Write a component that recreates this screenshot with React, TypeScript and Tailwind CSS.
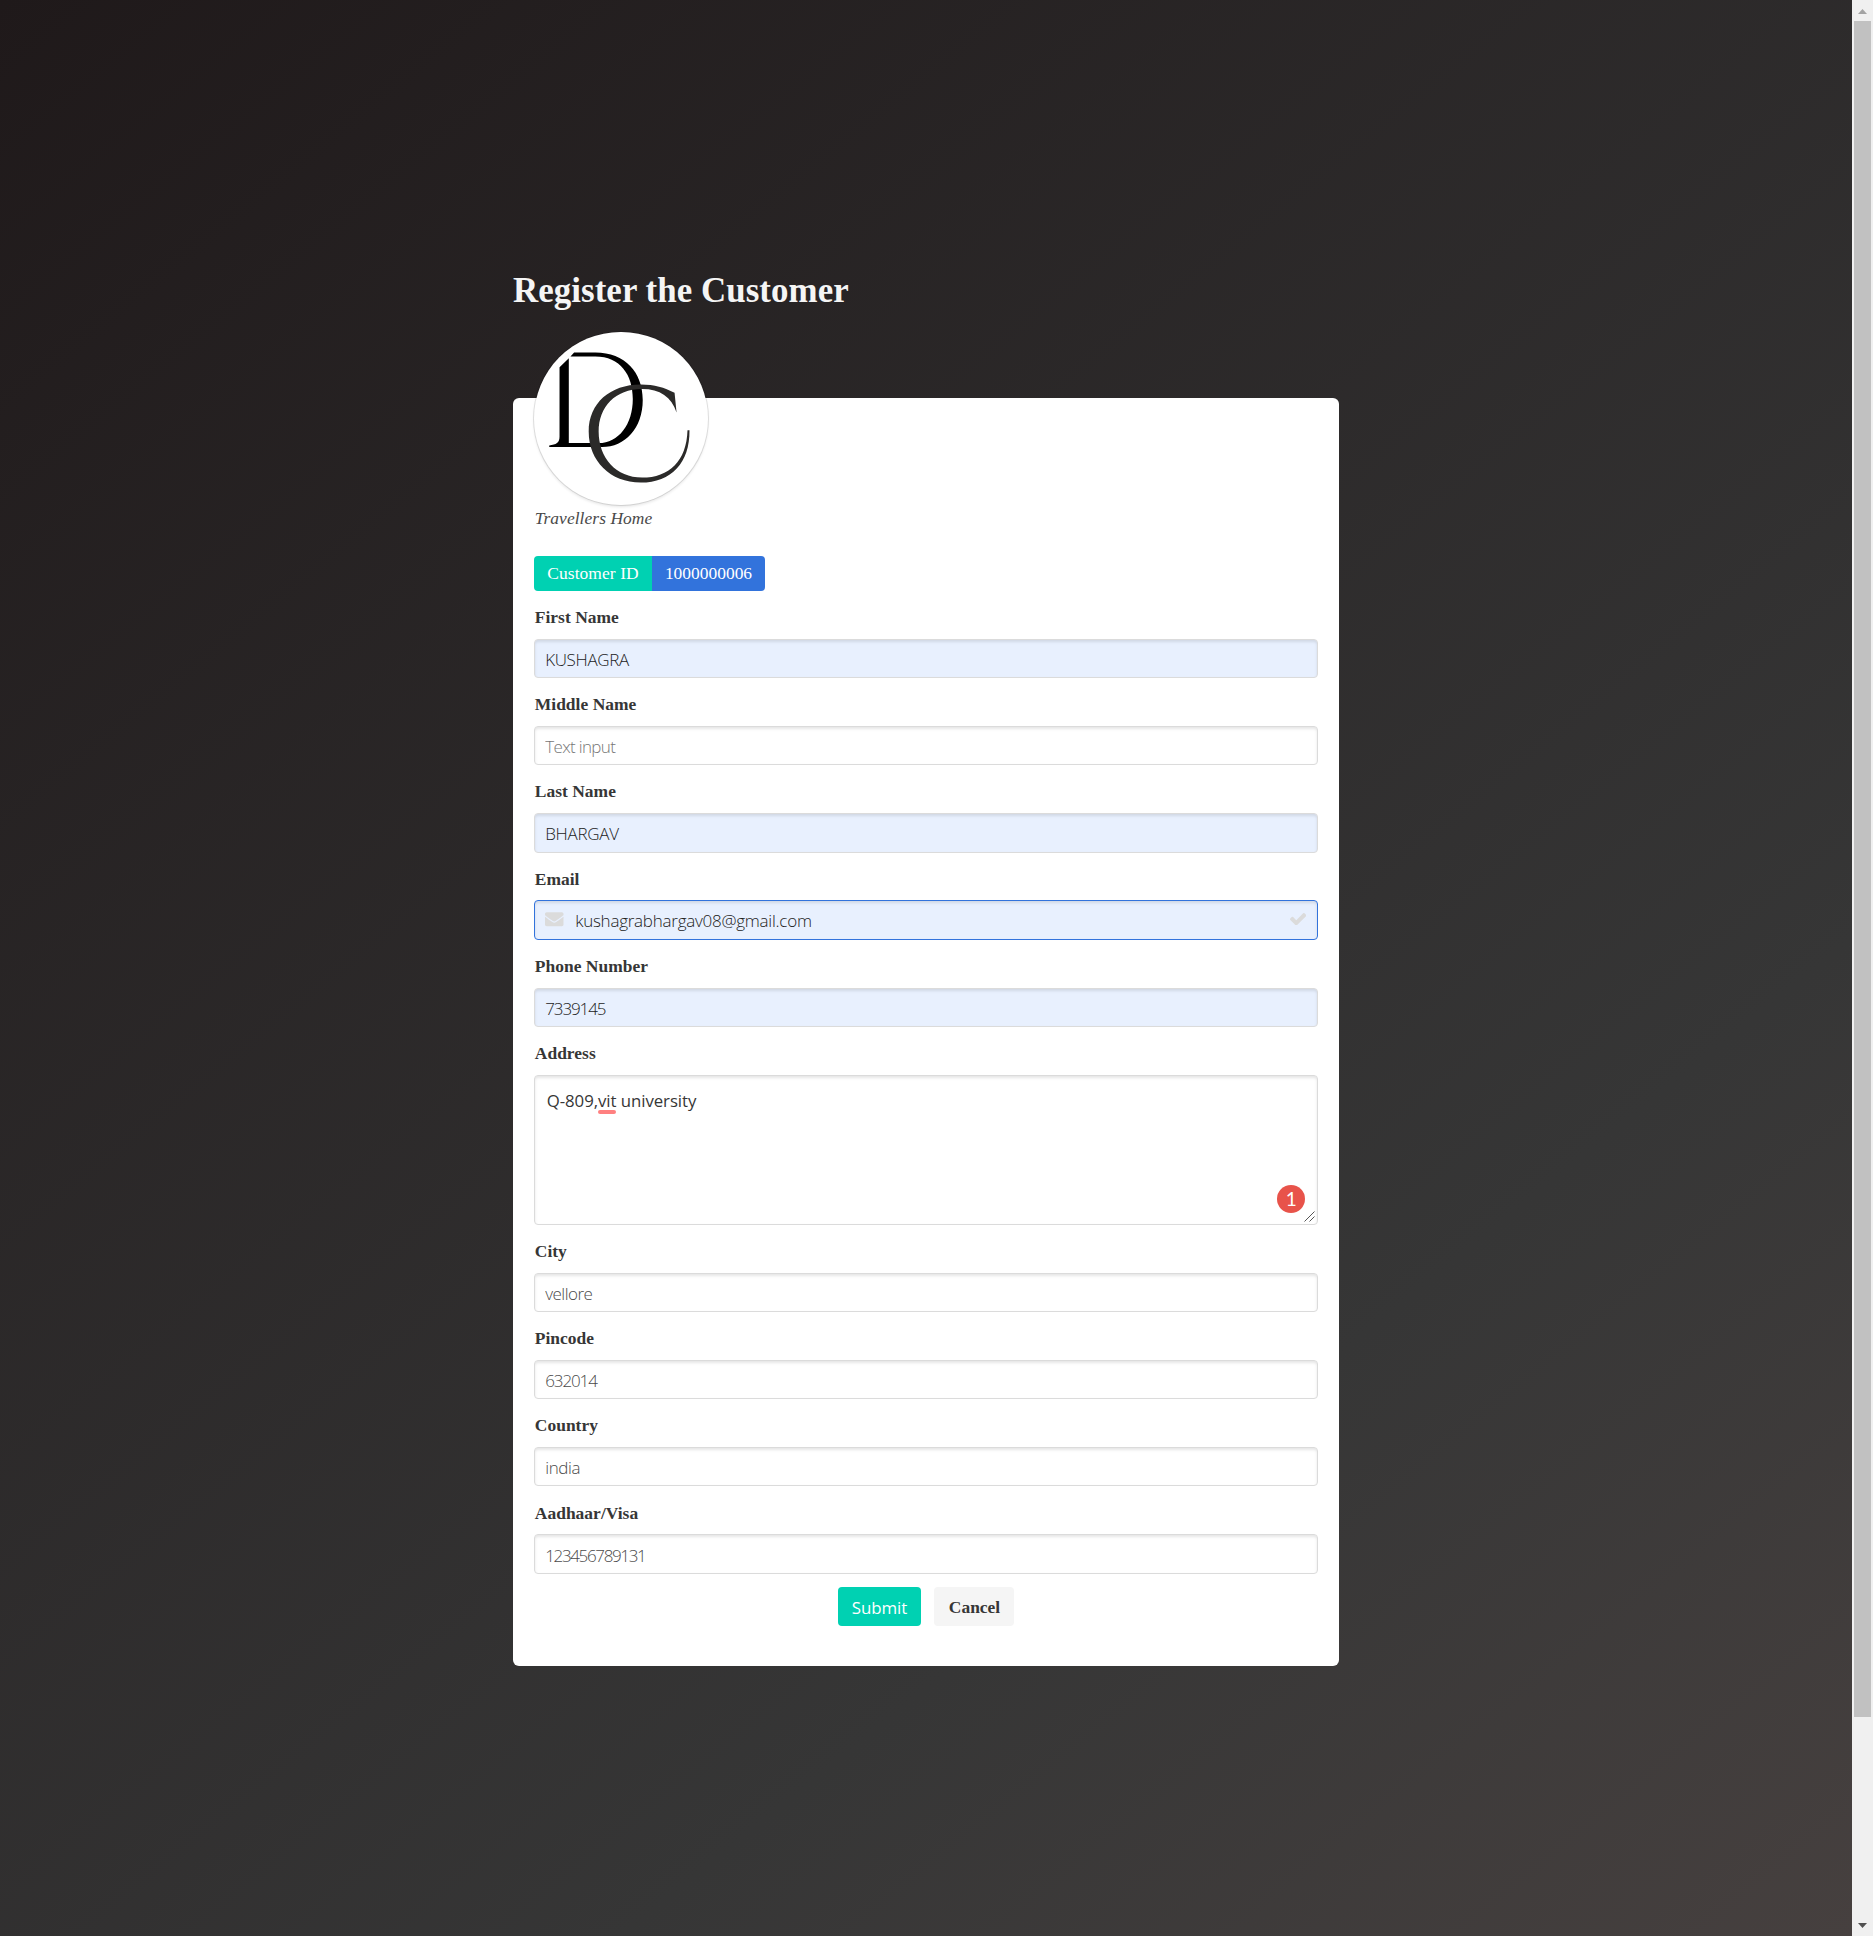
import React from "react";
import { FaEnvelope } from "react-icons/fa";

type FieldProps = {
  label: string;
  value?: string;
  placeholder?: string;
  filled?: boolean;
  spacing: string;
};

const labelClass =
  "mb-[8.72px] block pl-[0.6px] text-[17.44px] leading-[26.16px] tracking-[0.03px] font-bold text-[#363636]";
const inputClass =
  "block w-full rounded-[4px] border px-[10px] pt-[2px] font-['Open_Sans','Noto_Sans',sans-serif] text-[17px] font-light shadow-[inset_0_2px_3px_rgba(10,10,10,0.1)] outline-none";

function Field({ label, value, placeholder, filled, spacing }: FieldProps) {
  const tone = filled
    ? "bg-[#e8f0fe] text-[#222222]"
    : "bg-white text-[#4a4a4a] placeholder:text-[#777777]";
  return (
    <div className="mb-[13.08px]">
      <label className={labelClass}>{label}</label>
      <input
        className={`${inputClass} h-[39.24px] border-[#dbdbdb] ${tone} ${spacing}`}
        defaultValue={value}
        placeholder={placeholder}
      />
    </div>
  );
}

function Logo() {
  return (
    <svg viewBox="40 36 523 523" className="h-full w-full">
      <path
        fill="#000"
        d="M117 142 L145 115 V371 H235 C295 371 338 315 338 238 C338 165 300 110 225 110 H150 L161 98 H225 C315 98 368 158 368 241 C368 326 315 383 245 383 H86 V378 C107 376 117 370 117 352 Z"
      />
      <path
        fill="#2b2a29"
        d="M470 279 C455 232 420 208 366 208 C285 208 235 262 235 336 C235 416 288 475 366 475 C448 475 500 425 503 332 H509 C510 430 455 490 362 490 C270 490 205 425 205 336 C205 250 270 194 362 194 C405 194 432 203 464 219 Z"
      />
    </svg>
  );
}

function CheckIcon() {
  return (
    <svg
      viewBox="0 0 1550 1188"
      className="absolute top-[13px] right-[12px] h-[12.5px] w-[16.3px]"
      fill="#dbdbdb"
    >
      <path d="M1550 232q0 40-28 68L798 1024l-136 136q-28 28-68 28t-68-28L390 1024 28 662Q0 634 0 594t28-68l136-136q28-28 68-28t68 28l294 295L1250 28q28-28 68-28t68 28l136 136q28 28 28 68z" />
    </svg>
  );
}

function Scrollbar() {
  return (
    <div className="flex w-[21px] shrink-0 flex-col items-center bg-[#f0f0f0]">
      <svg viewBox="0 0 9 5" className="mt-[9px] h-[5px] w-[9px]">
        <path d="M0 5 L4.5 0 L9 5 Z" fill="#a3a3a3" />
      </svg>
      <div className="mt-[7px] h-[1696px] w-[17px] bg-[#c1c1c1]" />
      <svg viewBox="0 0 9 5" className="mt-auto mb-[8px] h-[5px] w-[9px]">
        <path d="M0 0 L4.5 5 L9 0 Z" fill="#505050" />
      </svg>
    </div>
  );
}

export default function App() {
  return (
    <div className="flex h-[1936px] w-full overflow-hidden font-['Liberation_Serif',serif] text-[17.44px] text-[#4a4a4a]">
      <main className="flex flex-1 justify-center bg-[linear-gradient(141deg,#1f191a_0%,#363636_71%,#46403f_100%)] pt-[271.3px]">
        <div className="w-[826px]">
          <h1 className="text-[34.88px] leading-[39.24px] tracking-[0.06px] font-bold text-[#f5f5f5]">
            Register the Customer
          </h1>
          <section className="mt-[87px] h-[1268px] rounded-[6px] bg-white px-[21.2px] pt-[21.8px]">
            <div className="-mt-[87.5px] h-[173.4px] w-[173.4px] overflow-hidden rounded-full bg-white shadow-[0_2px_3px_rgba(10,10,10,0.1),0_0_0_1px_rgba(10,10,10,0.1)]">
              <Logo />
            </div>
            <p className="mt-[0.2px] pl-[0.5px] leading-[26.16px] tracking-[0.06px] italic">
              Travellers Home
            </p>
            <div className="mt-[24.6px] mb-[13.08px] flex h-[34.88px] items-center text-white">
              <span className="flex h-full items-center rounded-l-[4px] bg-[#00d1b2] px-[13.08px] pb-[2px] tracking-[0.08px]">
                Customer ID
              </span>
              <span className="flex h-full items-center rounded-r-[4px] bg-[#3273dc] px-[13.08px] pb-[2px]">
                1000000006
              </span>
            </div>

            <Field label="First Name" value="KUSHAGRA" filled spacing="tracking-[-0.35px]" />
            <Field label="Middle Name" placeholder="Text input" spacing="tracking-[-0.65px]" />
            <Field label="Last Name" value="BHARGAV" filled spacing="tracking-[-0.27px]" />

            <div className="mb-[13.08px]">
              <label className={labelClass}>Email</label>
              <div className="relative -mt-[0.6px]">
                <input
                  className={`${inputClass} h-[39.84px] border-[#3273dc] bg-[#e8f0fe] pl-[40px] tracking-[-0.25px] text-[#222222]`}
                  defaultValue="kushagrabhargav08@gmail.com"
                />
                <FaEnvelope className="absolute top-[10px] left-[11px] size-[18.5px] text-[#dbdbdb]" />
                <CheckIcon />
              </div>
            </div>

            <Field label="Phone Number" value="7339145" filled spacing="tracking-[-1.1px]" />

            <div className="mb-[13.08px]">
              <label className={labelClass}>Address</label>
              <div className="relative h-[150px] rounded-[4px] border border-[#dbdbdb] px-[11.5px] pt-[12.3px] font-['Open_Sans','Noto_Sans',sans-serif] text-[16.8px] leading-[26.16px] tracking-[-0.05px] text-[#363636] shadow-[inset_0_2px_3px_rgba(10,10,10,0.1)]">
                Q-809,
                <span className="relative">
                  vit
                  <span className="absolute inset-x-0 bottom-[-2px] h-[4px] rounded-full bg-[#ff8080]" />
                </span>{" "}
                university
                <span className="absolute right-[11.5px] bottom-[11px] flex size-[28px] items-center justify-center rounded-full bg-[#e8534a] font-[Lato,sans-serif] text-[19px] text-white">
                  1
                </span>
                <svg
                  viewBox="0 0 11 11"
                  className="absolute right-[2px] bottom-[2px] size-[11px]"
                  stroke="#555555"
                  strokeWidth="1"
                >
                  <path d="M0.5 10.5 L10.5 0.5 M5.5 10.5 L10.5 5.5" />
                </svg>
              </div>
            </div>

            <Field label="City" value="vellore" spacing="tracking-[-0.5px]" />
            <Field label="Pincode" value="632014" spacing="tracking-[-1.1px]" />
            <Field label="Country" value="india" spacing="tracking-[-0.4px]" />
            <Field label="Aadhaar/Visa" value="123456789131" spacing="tracking-[-1.35px]" />

            <div className="flex justify-center gap-[13px]">
              <button className="h-[39.24px] w-[83px] rounded-[4px] bg-[#00d1b2] pt-[2px] font-['Open_Sans','Noto_Sans',sans-serif] text-[16.9px] tracking-[-0.1px] text-white">
                Submit
              </button>
              <button className="h-[39.24px] w-[80px] rounded-[4px] bg-[#f5f5f5] pt-[2px] pl-[1px] font-bold text-[#363636]">
                Cancel
              </button>
            </div>
          </section>
        </div>
      </main>
      <Scrollbar />
    </div>
  );
}
